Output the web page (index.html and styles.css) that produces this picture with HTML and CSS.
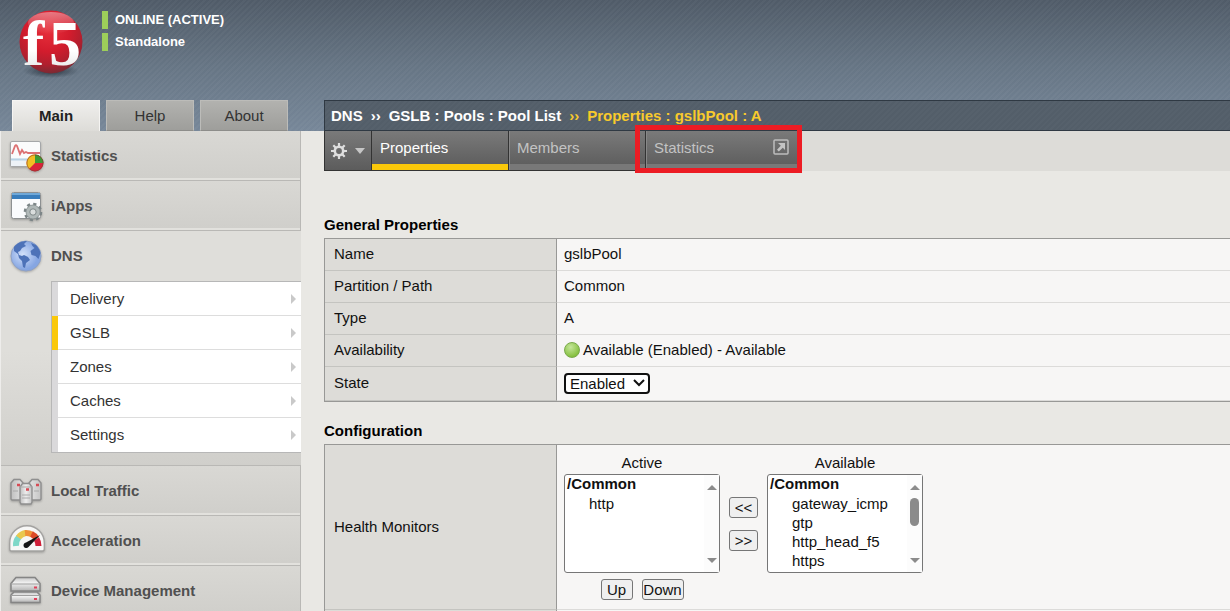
FILE: index.html
```html
<!DOCTYPE html>
<html lang="en">
<head>
<meta charset="utf-8">
<title>GSLB Pool Properties</title>
<link rel="stylesheet" href="styles.css">
</head>
<body>
<div class="shell">
  <aside class="side">
    <header class="brand">
      <svg class="logo" viewBox="0 0 70 76" role="img" aria-label="f5">
        <defs>
          <radialGradient id="ball" cx=".45" cy=".3" r=".7"><stop offset="0" stop-color="#e8303c"/><stop offset=".5" stop-color="#d31c2d"/><stop offset=".8" stop-color="#b01f2e"/><stop offset="1" stop-color="#7b2a33"/></radialGradient>
          <linearGradient id="shine" x2="0" y2="1"><stop offset="0" stop-color="#fff" stop-opacity=".4"/><stop offset="1" stop-color="#fff" stop-opacity="0"/></linearGradient>
          <linearGradient id="letters" x2="0" y2="1"><stop offset="0" stop-color="#fff"/><stop offset=".6" stop-color="#fff"/><stop offset="1" stop-color="#dcdcdc"/></linearGradient>
          <radialGradient id="shade"><stop offset="0" stop-color="#222d38" stop-opacity=".9"/><stop offset="1" stop-color="#222d38" stop-opacity="0"/></radialGradient>
        </defs>
        <ellipse cx="35" cy="62" rx="28" ry="7" fill="url(#shade)"/>
        <circle cx="35" cy="33" r="31.500" fill="url(#ball)"/>
        <ellipse cx="35" cy="14" rx="23" ry="11" fill="url(#shine)"/>
        <text class="logo-text" x="7" y="56" fill="url(#letters)">f</text>
        <text class="logo-text" x="33" y="56" fill="url(#letters)">5</text>
      </svg>
      <div class="states">
        <span class="state">ONLINE (ACTIVE)</span>
        <span class="state">Standalone</span>
      </div>
    </header>
    <div class="side-tabs">
      <button class="side-tab is-active" type="button">Main</button>
      <button class="side-tab" type="button">Help</button>
      <button class="side-tab" type="button">About</button>
    </div>
    <nav class="nav">
      <a class="nav-item" href="#statistics">
        <svg class="icon" viewBox="0 0 36 36">
          <rect x="1.500" y="3.500" width="30" height="25" rx="1.500" fill="#fafbfc" stroke="#a5a7a9"/>
          <path d="M2 20h29v8H2z" fill="#edf2f7"/><path d="M2 21.500h28" stroke="#b8d2e4" stroke-width="2"/>
          <path d="M3 16l3-8q1-1.500 2 0l3 8 2-4 2 3 2-1 2 1h12" fill="none" stroke="#dc7072" stroke-width="1.800"/>
          <circle cx="26" cy="25" r="8.500" fill="#d8233a"/>
          <path d="M26 25V16.500a8.500 8.500 0 0 1 8.500 8.500z" fill="#3b9b35"/>
          <path d="M26 25V16.500a8.500 8.500 0 0 0-6 14.500z" fill="#f2be23"/>
          <circle cx="26" cy="25" r="8" fill="none" stroke="#7b3d2c" stroke-opacity=".5"/>
        </svg>Statistics</a>
      <a class="nav-item" href="#iapps">
        <svg class="icon" viewBox="0 0 36 36">
          <rect x="2.500" y="4.500" width="29" height="26" rx="2" fill="#fafbfd" stroke="#8d9092"/>
          <path d="M3 5h28v6H3z" fill="#397dbc"/><path d="M3 5h28v2H3z" fill="#6fa8d8"/>
          <g transform="translate(24 24)"><circle r="8" fill="none" stroke="#7c8587" stroke-width="2.600" stroke-dasharray="3.140 3.140"/><circle r="7" fill="#b0b8b8" stroke="#838c8d" stroke-width=".8"/><circle r="3.200" fill="#d9dddd" stroke="#7f8889"/></g>
        </svg>iApps</a>
      <div class="nav-group">
        <a class="nav-item" href="#dns">
          <svg class="icon" viewBox="0 0 36 36">
            <defs><radialGradient id="sea" cx=".4" cy=".45"><stop offset="0" stop-color="#d3e1fa"/><stop offset="1" stop-color="#86a6e2"/></radialGradient></defs>
            <circle cx="17" cy="18" r="15" fill="url(#sea)" stroke="#8da0c6"/>
            <path d="M5 9c3-4 8-6 13-6l-3 3 2 2-4 2-2 3-2 1 1 3 3 1 2-1 4 2 2 3-4 3-1 5-2-1-1-6-3-3-1-4-4-3zM22 5l5 2c2 2 4 5 4.500 8l-2 6-3-3-4-1-1-4 4-3-2-2z" fill="#4d72b8"/>
          </svg>DNS</a>
        <div class="submenu">
          <a class="sub-item" href="#delivery">Delivery</a>
          <a class="sub-item is-current" href="#gslb">GSLB</a>
          <a class="sub-item" href="#zones">Zones</a>
          <a class="sub-item" href="#caches">Caches</a>
          <a class="sub-item" href="#settings">Settings</a>
        </div>
      </div>
      <a class="nav-item" href="#local-traffic">
        <svg class="icon" viewBox="0 0 36 36">
          <defs><linearGradient id="steel"><stop offset="0" stop-color="#c0c0c0"/><stop offset=".5" stop-color="#ededed"/><stop offset="1" stop-color="#c4c4c4"/></linearGradient></defs>
          <g fill="url(#steel)" stroke="#8f8f8f" stroke-width="1.400">
            <path d="M2 10l3-3.500h6l3 3.500v15l-1 2H3l-1-1zM20 10l3-3.500h6l3 3.500v16l-1 1H21l-1-2z"/>
            <path d="M11 14l2.500-3.500h7L23 14v15l-1 2H12l-1-2z"/>
          </g>
          <path d="M11 14h12M13 22h8M13 25h8M4 18h5M25 18h5" stroke="#aaa"/>
          <path d="M8 12h3M17 16.500h3M27 12h3" stroke="#d64b55" stroke-width="2.400"/>
        </svg>Local Traffic</a>
      <a class="nav-item" href="#acceleration">
        <svg class="icon" viewBox="0 0 36 36">
          <path d="M.700 20a17 17 0 0 1 34.600 0v6q0 2-2 2H2.700q-2 0-2-2z" fill="#f7f7f6" stroke="#a3a2a0" stroke-width="1.400"/>
          <g fill="none" stroke-width="6"><path d="M7 23a11.500 11.500 0 0 1 3-9" stroke="#7fd8c8"/><path d="M9.500 14.500a12 12 0 0 1 7-4.500" stroke="#e9c84e"/><path d="M16 10a12 12 0 0 1 7 1.500" stroke="#ef9137"/><path d="M22.500 11a12 12 0 0 1 5 4.500" stroke="#dd4a28"/><path d="M27.500 16a12 12 0 0 1 2 7" stroke="#cf1f38"/></g>
          <path d="M31 12L17 19.500a2.800 2.800 0 1 0 2.500 4.500z" fill="#151515"/>
        </svg>Acceleration</a>
      <a class="nav-item" href="#device-management">
        <svg class="icon" viewBox="0 0 36 36">
          <defs><linearGradient id="rack" x2="0" y2="1"><stop offset="0" stop-color="#c6c6c6"/><stop offset=".4" stop-color="#f2f2f2"/><stop offset="1" stop-color="#b3b3b3"/></linearGradient></defs>
          <g fill="url(#rack)" stroke="#858585" stroke-width="1.500"><path d="M2 10.500l5-6h19l5 6v7.500H2z"/><path d="M2 22l3-3h23l3 3v7.500H2z"/></g>
          <path d="M2 11h29M2 22.500h29" stroke="#a0a0a0"/>
          <path d="M25 14.500h3M25 26h3" stroke="#e0405a" stroke-width="2.200"/>
        </svg>Device Management</a>
    </nav>
  </aside>

  <main class="main">
    <div class="crumbs">
      <span>DNS</span><span>››</span><span>GSLB : Pools : Pool List</span><span class="crumb-here">››</span><span class="crumb-here">Properties : gslbPool : A</span>
    </div>
    <div class="tabs">
      <button class="tab-menu" type="button" aria-label="Options">
        <svg class="gear" viewBox="0 0 16 16"><circle cx="8" cy="8" r="4.200" fill="none" stroke="#dedede" stroke-width="2.600"/><path d="M8 0v3M8 13v3M0 8h3M13 8h3M2.300 2.300l2.200 2.200M11.500 11.500l2.200 2.200M2.300 13.700l2.200-2.200M11.500 4.500l2.200-2.200" stroke="#dedede" stroke-width="2.200"/></svg>
        <svg class="caret" viewBox="0 0 10 6"><path d="M0 0h10L5 6z" fill="#c6c6c6"/></svg>
      </button>
      <a class="tab is-open" href="#properties">Properties</a>
      <a class="tab" href="#members">Members</a>
      <a class="tab tab-wide" href="#pool-statistics">Statistics
        <svg class="popout" viewBox="0 0 16 16"><rect x="1" y="1" width="14" height="14" rx="1" fill="none" stroke="#bdbdbd" stroke-width="1.500"/><path d="M5 4h7v7l-2.200-2.200-4 3.700-1.800-1.800 3.800-4z" fill="#c4c4c4"/></svg>
        <span class="marker"></span>
      </a>
    </div>

    <h2 class="heading">General Properties</h2>
    <table class="props">
      <tr><th scope="row">Name</th><td>gslbPool</td></tr>
      <tr><th scope="row">Partition / Path</th><td>Common</td></tr>
      <tr><th scope="row">Type</th><td>A</td></tr>
      <tr><th scope="row">Availability</th><td><span class="status"><span class="dot"></span>Available (Enabled) - Available</span></td></tr>
      <tr class="tall"><th scope="row"><label for="state">State</label></th><td><select class="state-select" id="state"><option>Enabled</option><option>Disabled</option></select></td></tr>
    </table>

    <h2 class="heading heading-next">Configuration</h2>
    <table class="props">
      <tr><th scope="row">Health Monitors</th><td>
        <div class="picker">
          <div class="picker-col">
            <label for="active">Active</label>
            <div class="listwrap">
              <select class="list" id="active" multiple>
                <optgroup label="/Common"><option>http</option></optgroup>
              </select>
              <span class="bar"><span class="up"></span><span class="down"></span></span>
            </div>
            <div class="order"><button class="btn" type="button">Up</button><button class="btn btn-down" type="button">Down</button></div>
          </div>
          <div class="moves"><button class="btn" type="button">&lt;&lt;</button><button class="btn" type="button">&gt;&gt;</button></div>
          <div class="picker-col">
            <label for="available">Available</label>
            <div class="listwrap">
              <select class="list" id="available" multiple>
                <optgroup label="/Common"><option>gateway_icmp</option><option>gtp</option><option>http_head_f5</option><option>https</option></optgroup>
              </select>
              <span class="bar"><span class="up"></span><span class="thumb"></span><span class="down"></span></span>
            </div>
          </div>
        </div>
      </td></tr>
      <tr><th></th><td></td></tr>
    </table>
  </main>
</div>
</body>
</html>
```
FILE: styles.css
```css
* { box-sizing: border-box; }

body {
  margin: 0;
  background: #e9e8e4;
  color: #111;
  font: 15px/20px "Liberation Sans", Arial, sans-serif;
}

a { color: inherit; text-decoration: none; }
button, select { font: inherit; color: inherit; }

.shell {
  display: grid;
  grid-template-columns: 301px minmax(0, 1fr);
  column-gap: 23px;
  height: 100vh;
  overflow: hidden;
  background:
    repeating-linear-gradient(135deg, rgba(255, 255, 255, .03) 0 2px, transparent 2px 4px) 0 0 / 100% 131px no-repeat,
    linear-gradient(#505b68, #667584 50%, #778799) 0 0 / 100% 131px no-repeat;
}

/* Sidebar */
.brand { display: flex; height: 100px; padding: 9px 0 0 16px; gap: 16px; }
.logo { width: 70px; height: 76px; overflow: visible; }
.logo-text { font: bold 64px "Liberation Serif", serif; }
.states { display: flex; flex-direction: column; gap: 4px; padding-top: 2px; }
.state {
  padding-left: 7px;
  border-left: 6px solid #9dce5a;
  color: #fff;
  font-size: 13px;
  font-weight: bold;
  line-height: 18px;
}

.side-tabs { display: flex; gap: 6px; padding-left: 12px; }
.side-tab {
  width: 88px;
  height: 31px;
  padding: 0;
  border: 1px solid #bcbcb9;
  border-bottom-color: #8d8d8a;
  background: linear-gradient(#b2b2af, #9e9e9b);
  color: #333;
  font-size: 15px;
}
.side-tab.is-active {
  border-color: #f5f4f2;
  border-bottom: 0;
  background: linear-gradient(#f0efed, #dddcd8);
  color: #222;
  font-weight: bold;
}

.nav { border-left: 1px solid #eeedeb; background: #dddcd8; }
.nav-item {
  display: flex;
  align-items: center;
  gap: 6px;
  height: 50px;
  padding-left: 8px;
  border-right: 1px solid #b9b8b5;
  border-bottom: 1px solid #b9b8b5;
  background: linear-gradient(#d9d8d4, #d0cfcb 47px, #e2e1dd 47px);
  color: #505050;
  font-weight: bold;
}
.icon { width: 36px; height: 36px; filter: drop-shadow(0 1px 1px rgba(0, 0, 0, .25)); }
.nav-group {
  padding-bottom: 12px;
  border-bottom: 1px solid #b9b8b5;
  background: linear-gradient(#dfdeda 120px, #d0cfcb);
}
.nav-group .nav-item { border: 0; background: none; }
.submenu {
  margin-left: 50px;
  border: 1px solid #b7b7b7;
  border-right: 0;
  background: #fff;
}
.sub-item {
  display: flex;
  align-items: center;
  justify-content: space-between;
  height: 34px;
  padding: 0 5px 0 12px;
  border-left: 6px solid #dad9db;
  color: #333;
  box-shadow: inset 0 -1px #ddd;
}
.sub-item:last-child { box-shadow: none; }
.sub-item.is-current { border-left-color: #fac80a; }
.sub-item::after {
  content: "";
  border: 5px solid transparent;
  border-left-color: #c9c9c9;
  border-right: 0;
}

/* Breadcrumb and tab bar */
.main { padding-top: 100px; }
.crumbs {
  display: flex;
  align-items: center;
  gap: 8px;
  height: 31px;
  padding-left: 6px;
  border: 1px solid #2f3943;
  border-right: 0;
  background:
    repeating-linear-gradient(135deg, rgba(255, 255, 255, .02) 0 2px, transparent 2px 4px),
    #535e69;
  color: #fff;
  font-weight: bold;
}
.crumb-here { color: #f8ca2c; }

.tabs { display: flex; height: 40px; background: #dddcd8; }
.tab-menu {
  display: flex;
  align-items: center;
  gap: 8px;
  width: 48px;
  padding: 0 0 0 6px;
  border: 1px solid #333;
  border-top: 0;
  background: linear-gradient(#7a7a7a, #5c5c5c);
}
.gear { width: 16px; height: 16px; }
.caret { width: 10px; height: 6px; }
.tab {
  position: relative;
  display: flex;
  justify-content: space-between;
  width: 137px;
  padding: 7px 8px;
  border-right: 1px solid #333;
  border-bottom: 1px solid #333;
  background: linear-gradient(#7a7a7a, #5f5f5f 33px, #787878 33px);
  box-shadow: inset 1px 0 #888;
  color: #c3c3c3;
}
.tab.is-open {
  background: linear-gradient(#7a7a7a, #5f5f5f 33px, #fac80a 33px);
  box-shadow: none;
  color: #fff;
}
.tab-wide { width: 152px; }
.popout { width: 16px; height: 16px; margin-top: 1px; }
.marker {
  position: absolute;
  inset: -6px -5px -3px -11px;
  border: 5px solid #ec1c24;
}

/* Property tables */
.heading { margin: 44px 0 3px; color: #000; font-size: 15px; line-height: 20px; }
.heading-next { margin-top: 19px; }
.props {
  width: 100%;
  border: 1px solid #989896;
  border-right: 0;
  border-spacing: 0;
}
.props th, .props td {
  height: 32px;
  padding: 0 9px 1px;
  border-bottom: 1px solid #c4c4c0;
  text-align: left;
}
.props th { width: 232px; border-right: 1px solid #989896; background: #dddcd8; font-weight: normal; }
.props td { padding-left: 7px; border-bottom-color: #dcdbd9; background: #f7f6f5; }
.props .tall th, .props .tall td { height: 34px; }
.status { display: flex; align-items: center; gap: 3px; }
.dot {
  width: 16px;
  height: 16px;
  border: 1px solid #79a94b;
  border-radius: 50%;
  background: radial-gradient(circle at 40% 30%, #c5e69b, #84bf3d 75%);
}
.state-select {
  display: block;
  width: 86px;
  height: 21px;
  padding: 0 4px;
  appearance: none;
  border: 2px solid #101010;
  border-radius: 4px;
  background: #fff url("data:image/svg+xml,%3Csvg xmlns='http://www.w3.org/2000/svg' width='12' height='8'%3E%3Cpath d='M1 1l5 5 5-5' fill='none' stroke='%23111' stroke-width='2'/%3E%3C/svg%3E") right 3px center no-repeat;
  line-height: 17px;
}

.picker { display: flex; gap: 9px; padding: 8px 0; }
.picker-col { display: flex; flex-direction: column; width: 156px; }
.picker-col label { align-self: center; line-height: 20px; padding-bottom: 1px; }
.listwrap { position: relative; height: 99px; }
.list {
  display: block;
  width: 100%;
  height: 100%;
  padding: 0;
  overflow: hidden;
  border: 1px solid #767676;
  border-radius: 3px;
  background: #fff;
  outline: 0;
}
.list optgroup { font-weight: bold; line-height: 19px; }
.list option { min-height: 19px; padding: 0 0 0 24px; font-weight: normal; line-height: 19px; }
.list option:first-of-type { margin-top: 1px; }
.bar {
  position: absolute;
  inset: 1px 1px 1px auto;
  display: flex;
  flex-direction: column;
  align-items: center;
  width: 15px;
  padding: 10px 0 9px;
  background: #fcfcfc;
}
.up, .down { border: 5px solid transparent; }
.up { border-top: 0; border-bottom-color: #8b8b8b; }
.down { margin-top: auto; border-bottom: 0; border-top-color: #8b8b8b; }
.thumb { width: 9px; height: 28px; margin-top: 8px; border-radius: 5px; background: #8b8b8b; }
.moves { display: flex; flex-direction: column; gap: 12px; padding-top: 44px; }
.btn {
  width: 29px;
  height: 21px;
  padding: 0;
  border: 1px solid #767676;
  border-radius: 3px;
  background: #efefef;
  line-height: 19px;
}
.order { display: flex; justify-content: center; gap: 9px; padding-top: 6px; }
.order .btn { width: 32px; }
.order .btn-down { width: 42px; }
```
